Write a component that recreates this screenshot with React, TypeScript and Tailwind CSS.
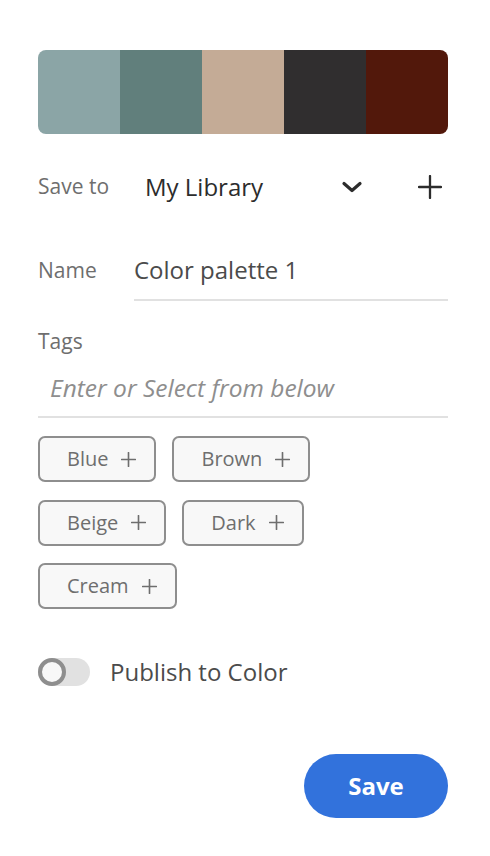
import React from "react";

const colors = ["#8ba5a6", "#617f7c", "#c4ab96", "#302e2f", "#52180b"];

function Plus({ size, stroke, color }: { size: number; stroke: number; color: string }) {
  return (
    <svg width={size} height={size} viewBox="0 0 24 24" fill="none">
      <path d="M12 1v22M1 12h22" stroke={color} strokeWidth={stroke} strokeLinecap="round" />
    </svg>
  );
}

function Chip({ label }: { label: string }) {
  return (
    <div className="h-[46px] flex items-center pl-[27px] pr-[18px] gap-[13px] rounded-[7px] border-2 border-[#8e8e8e] bg-[#f8f8f8]">
      <span className="text-[20px] text-[#6e6e6e]">{label}</span>
      <Plus size={15} stroke={2.6} color="#6e6e6e" />
    </div>
  );
}

export default function App() {
  return (
    <div
      className="w-[490px] h-[856px] bg-white pl-[38px] pr-[42px] pt-[50px]"
      style={{ fontFamily: '"Open Sans", "Noto Sans", sans-serif' }}
    >
      <div className="flex h-[84px] rounded-[8px] overflow-hidden">
        {colors.map((c) => (
          <div key={c} className="flex-1" style={{ backgroundColor: c }} />
        ))}
      </div>

      <div className="mt-[33px] h-[40px] flex items-center">
        <span className="w-[107px] text-[21px] text-[#6e6e6e]">Save to</span>
        <span className="text-[24px] text-[#2c2c2c]">My Library</span>
        <div className="ml-auto mr-[55px] flex">
          <svg width="22" height="14" viewBox="0 0 22 14" fill="none">
            <path d="M3 3.5l8 7 8-7" stroke="#2c2c2c" strokeWidth="3.2" strokeLinecap="round" strokeLinejoin="round" />
          </svg>
        </div>
        <div className="mr-[6px] flex">
          <Plus size={24} stroke={2.3} color="#2c2c2c" />
        </div>
      </div>

      <div className="mt-[38px] flex items-start">
        <span className="w-[96px] text-[21px] text-[#6e6e6e] flex items-center h-[52px]">Name</span>
        <div className="flex-1 h-[56px] pb-[4px] border-b-2 border-[#e1e1e1] flex items-center">
          <span className="text-[24px] text-[#4b4b4b]">Color palette 1</span>
        </div>
      </div>

      <div className="mt-[25px] text-[21px] text-[#6e6e6e] leading-[30px]">Tags</div>
      <div className="h-[62px] pt-[4px] border-b-2 border-[#e1e1e1] flex items-center pl-[12px]">
        <span className="italic text-[24.5px] text-[#8e8e8e]">Enter or Select from below</span>
      </div>

      <div className="mt-[18px] flex flex-col gap-[17.5px]">
        <div className="flex gap-[16px]">
          <Chip label="Blue" />
          <Chip label="Brown" />
        </div>
        <div className="flex gap-[16px]">
          <Chip label="Beige" />
          <Chip label="Dark" />
        </div>
        <div className="flex gap-[16px]">
          <Chip label="Cream" />
        </div>
      </div>

      <div className="mt-[45px] flex items-center">
        <div className="w-[52px] h-[28px] rounded-full bg-[#e1e1e1] relative">
          <div className="absolute left-0 top-0 w-[28px] h-[28px] rounded-full border-[4px] border-[#8e8e8e] bg-[#f8f8f8]" />
        </div>
        <span className="ml-[20px] text-[24px] text-[#4b4b4b]">Publish to Color</span>
      </div>

      <div className="mt-[64px] flex justify-end">
        <button className="w-[144px] h-[64px] rounded-full bg-[#3272dc] text-white text-[24px] font-bold">
          Save
        </button>
      </div>
    </div>
  );
}
